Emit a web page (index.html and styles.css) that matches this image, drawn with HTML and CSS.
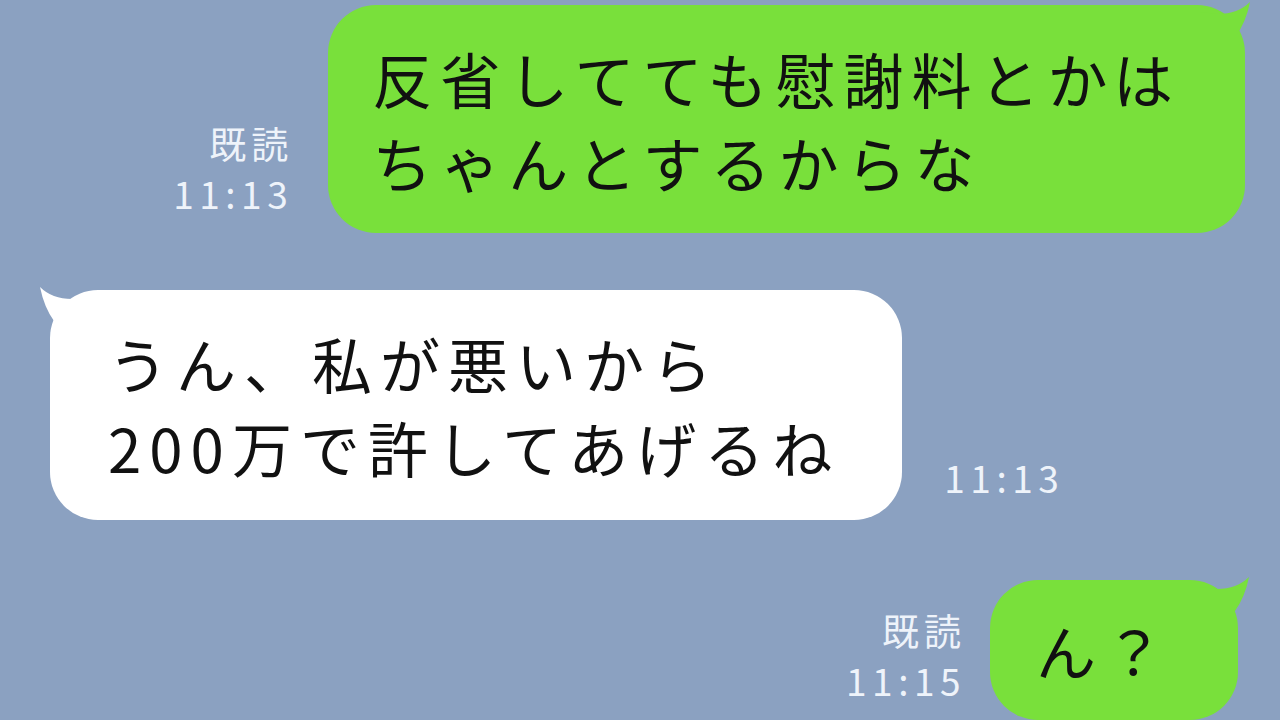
FILE: index.html
```html
<!DOCTYPE html>
<html lang="ja">
  <head>
    <meta charset="UTF-8" />
    <meta name="viewport" content="width=device-width, initial-scale=1.0" />
    <title>トーク</title>
    <link rel="stylesheet" href="styles.css">
  </head>
  <body>
    <div class="talk">
      <div class="row sent first">
        <div class="meta">
          <span>既読</span>
          <span class="time">11:13</span>
        </div>
        <div class="bubble green">
          <svg class="horn" viewBox="0 0 55 55"><path d="M0 12 L18 14 Q38 14 50 2 Q46 22 36 36 L36 55 L0 55 Z" /></svg>
          <p>反省してても慰謝料とかは<br>ちゃんとするからな</p>
        </div>
      </div>

      <div class="row received second">
        <div class="bubble white">
          <svg class="horn" viewBox="0 0 55 55"><path d="M0 12 L18 14 Q38 14 50 2 Q46 22 36 36 L36 55 L0 55 Z" /></svg>
          <p>うん、私が悪いから<br>200万で許してあげるね</p>
        </div>
        <div class="meta">
          <span class="time">11:13</span>
        </div>
      </div>

      <div class="row sent third">
        <div class="meta">
          <span>既読</span>
          <span class="time">11:15</span>
        </div>
        <div class="bubble green short">
          <svg class="horn" viewBox="0 0 55 55"><path d="M0 12 L18 14 Q38 14 50 2 Q46 22 36 36 L36 55 L0 55 Z" /></svg>
          <p>ん？</p>
        </div>
      </div>
    </div>
  </body>
</html>
```

FILE: styles.css
```css
body {
  margin: 0;
  height: 720px;
  overflow: hidden;
  background-color: #8ba1c1;
  font-family: "Noto Sans CJK JP", "Noto Sans", sans-serif;
}
.talk {
  display: flex;
  flex-direction: column;
  padding-top: 5px;
}
.row {
  display: flex;
  align-items: flex-end;
}
.row.sent {
  justify-content: flex-end;
}
.row.received {
  justify-content: flex-start;
}
.row.first {
  margin-right: 35px;
}
.row.second {
  margin-top: 57px;
  margin-left: 50px;
}
.row.third {
  margin-top: 60px;
  margin-right: 42px;
}
.bubble {
  position: relative;
  border-radius: 48px;
}
.bubble p {
  position: relative;
  margin: 0;
  font-size: 60px;
  line-height: 84px;
  letter-spacing: 8px;
  color: #111;
  white-space: nowrap;
}
.bubble.green {
  background-color: #79e03b;
  padding: 31px 64px 29px 44px;
}
.bubble.green.short {
  padding: 28px 66px 28px 46px;
}
.bubble.white {
  background-color: #fff;
  padding: 31px 62px 31px 58px;
}
.horn {
  position: absolute;
  top: -5px;
  width: 55px;
  height: 55px;
}
.green .horn {
  right: -10px;
  fill: #79e03b;
}
.short .horn {
  right: -16px;
}
.white .horn {
  left: -15px;
  fill: #fff;
  transform: scaleX(-1);
}
.meta {
  display: flex;
  flex-direction: column;
  align-items: flex-end;
  color: #eef3fa;
  font-size: 37px;
  line-height: 50px;
  letter-spacing: 5px;
  margin-bottom: 15px;
}
.sent .meta {
  margin-right: 35px;
}
.third .meta {
  margin-right: 24px;
}
.received .meta {
  margin-left: 42px;
  margin-bottom: 18px;
}
.meta .time {
  letter-spacing: 5.5px;
}
```
